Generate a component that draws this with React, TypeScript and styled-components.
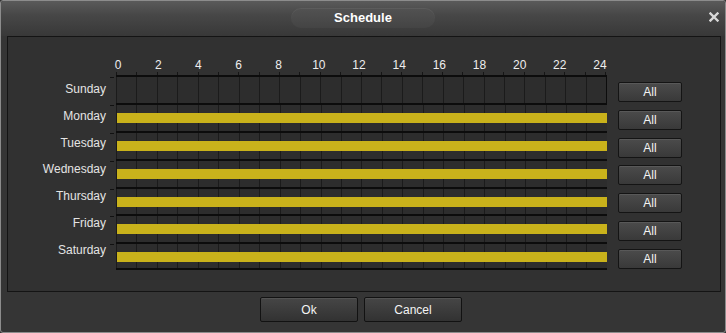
import React from "react";
import styled, { createGlobalStyle } from "styled-components";

const Global = createGlobalStyle`
  html, body { margin: 0; padding: 0; background: #333; }
  body { font-family: "Liberation Sans", Arial, sans-serif; }
  * { box-sizing: border-box; }
`;

const Dialog = styled.div`
  width: 726px;
  height: 333px;
  border: 1px solid #8c8c8c;
  border-radius: 3px;
  background: #353535;
  display: flex;
  flex-direction: column;
  overflow: hidden;
`;

const TitleBar = styled.div`
  height: 35px;
  flex: none;
  display: grid;
  grid-template-columns: 1fr auto 1fr;
  align-items: start;
  background: linear-gradient(#5a5a5a 0%, #474747 40%, #383838 100%);
`;

const TitlePill = styled.div`
  grid-column: 2;
  margin-top: 7px;
  width: 144px;
  height: 20px;
  border-radius: 10px;
  background: linear-gradient(#525252, #444444);
  box-shadow: inset 0 1px 0 rgba(255, 255, 255, 0.06);
  color: #fff;
  font-weight: bold;
  font-size: 13px;
  line-height: 20px;
  text-align: center;
`;

const CloseBtn = styled.div`
  grid-column: 3;
  justify-self: end;
  margin-top: 11px;
  margin-right: 6px;
  width: 10px;
  height: 10px;
  display: flex;
`;

const Panel = styled.div`
  margin: 0 4px 0 6px;
  height: 256px;
  flex: none;
  border: 1px solid #141414;
  background: #313131;
  padding-top: 21px;
`;

const HourRow = styled.div`
  display: flex;
  padding-left: 90px;
  height: 14px;
`;

const HourLabel = styled.div`
  width: 40.17px;
  flex: none;
  text-align: center;
  color: #eeeeee;
  font-size: 12px;
  line-height: 14px;
`;

const TickRow = styled.div`
  display: flex;
  margin-left: 108px;
  width: 490px;
  height: 3px;
`;

const Tick = styled.div`
  flex: 1;
  border-left: 1px solid #151515;
  &:last-child { border-right: 1px solid #151515; }
`;

const Body = styled.div`
  display: flex;
`;

const LabelColumn = styled.div`
  width: 98px;
  display: flex;
  flex-direction: column;
  padding-top: 7px;
`;

const DayLabel = styled.div`
  height: 26.83px;
  text-align: right;
  color: #e4e4e4;
  font-size: 12px;
  line-height: 14px;
`;

const TrackColumn = styled.div`
  margin-left: 10px;
  width: 491px;
  display: flex;
  flex-direction: column;
`;

const Track = styled.div<{ $last?: boolean }>`
  position: relative;
  height: 27.9px;
  display: flex;
  border-top: 2px solid #0c0c0c;
  border-bottom: ${(p) => (p.$last ? "2px solid #0c0c0c" : "none")};
  background: #2d2d2d;
  &::before {
    content: "";
    position: absolute;
    left: -6px;
    top: 0;
    width: 4px;
    height: 1px;
    background: #111;
  }
`;

const Cell = styled.div`
  flex: 1;
  border-left: 1px solid #1b1b1b;
  &:last-child { border-right: 1px solid #0c0c0c; }
`;

const Bar = styled.div`
  position: absolute;
  left: 1px;
  right: 0;
  top: 8px;
  height: 10px;
  background: #c9b21b;
`;

const ButtonColumn = styled.div`
  margin-left: 11px;
  display: flex;
  flex-direction: column;
`;

const ButtonSlot = styled.div`
  height: 27.8px;
  padding-top: 7px;
`;

const AllButton = styled.button`
  display: block;
  width: 64px;
  height: 20px;
  padding: 0;
  border: 1px solid #141414;
  border-radius: 2px;
  background: linear-gradient(#4b4b4b, #393939);
  box-shadow: inset 0 1px 0 rgba(255, 255, 255, 0.08);
  color: #f4f4f4;
  font-family: "Liberation Sans", Arial, sans-serif;
  font-size: 12px;
  line-height: 18px;
`;

const Footer = styled.div`
  flex: 1;
  display: flex;
  justify-content: center;
  gap: 6px;
  padding-top: 5px;
  padding-right: 4px;
`;

const FooterButton = styled.button`
  width: 98px;
  height: 25px;
  padding: 0;
  border: 1px solid #121212;
  border-radius: 2px;
  background: linear-gradient(#464646, #323232);
  box-shadow: inset 0 1px 0 rgba(255, 255, 255, 0.07);
  color: #f4f4f4;
  font-family: "Liberation Sans", Arial, sans-serif;
  font-size: 12px;
`;

const days = ["Sunday", "Monday", "Tuesday", "Wednesday", "Thursday", "Friday", "Saturday"];
const active = [false, true, true, true, true, true, true];
const hours = Array.from({ length: 13 }, (_, i) => i * 2);
const cells = Array.from({ length: 24 }, (_, i) => i);

export default function App() {
  return (
    <>
      <Global />
      <Dialog>
        <TitleBar>
          <TitlePill>Schedule</TitlePill>
          <CloseBtn>
            <svg width="10" height="10" viewBox="0 0 10 10">
              <path d="M1.5 1.5 L8.5 8.5 M8.5 1.5 L1.5 8.5" stroke="#d8d8d8" strokeWidth="2.4" strokeLinecap="square" />
            </svg>
          </CloseBtn>
        </TitleBar>
        <Panel>
          <HourRow>
            {hours.map((h) => (
              <HourLabel key={h}>{h}</HourLabel>
            ))}
          </HourRow>
          <TickRow>
            {cells.map((c) => (
              <Tick key={c} />
            ))}
          </TickRow>
          <Body>
            <LabelColumn>
              {days.map((d) => (
                <DayLabel key={d}>{d}</DayLabel>
              ))}
            </LabelColumn>
            <TrackColumn>
              {days.map((d, i) => (
                <Track key={d} $last={i === days.length - 1}>
                  {cells.map((c) => (
                    <Cell key={c} />
                  ))}
                  {active[i] && <Bar />}
                </Track>
              ))}
            </TrackColumn>
            <ButtonColumn>
              {days.map((d) => (
                <ButtonSlot key={d}>
                  <AllButton>All</AllButton>
                </ButtonSlot>
              ))}
            </ButtonColumn>
          </Body>
        </Panel>
        <Footer>
          <FooterButton>Ok</FooterButton>
          <FooterButton>Cancel</FooterButton>
        </Footer>
      </Dialog>
    </>
  );
}
